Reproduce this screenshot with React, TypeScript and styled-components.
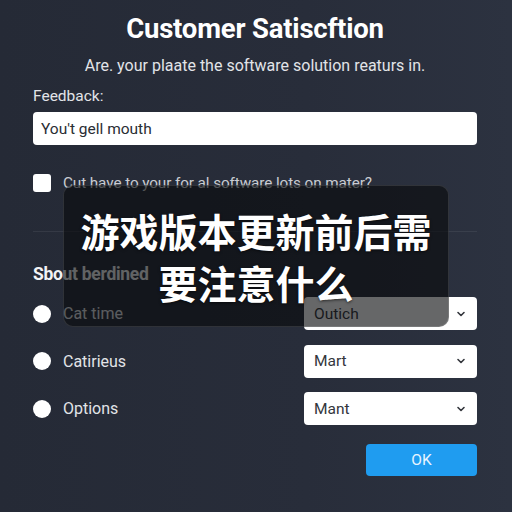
import styled, { createGlobalStyle } from 'styled-components'

const GlobalStyle = createGlobalStyle`
  html, body {
    margin: 0;
    padding: 0;
    width: 512px;
    height: 512px;
    overflow: hidden;
    background: #272c38;
  }
  * { box-sizing: border-box; }
`

const Page = styled.div`
  position: relative;
  width: 512px;
  height: 512px;
  padding: 13px 35px 0 33px;
  background: linear-gradient(90deg, #252a36 0%, #282d3a 60%, #2c3240 100%);
  font-family: Roboto, "Noto Sans", "Liberation Sans", sans-serif;
  color: #e6e8ec;
  display: flex;
  flex-direction: column;
`

const Title = styled.h1`
  margin: 0;
  text-align: center;
  font-size: 27.5px;
  font-weight: 700;
  line-height: 32px;
  letter-spacing: -0.2px;
  color: #ffffff;
`

const Subtitle = styled.p`
  margin: 10px 0 0;
  text-align: center;
  font-size: 16px;
  line-height: 22px;
  color: #e2e4e8;
`

const Label = styled.label`
  margin-top: 9px;
  font-size: 15.5px;
  line-height: 20px;
  color: #e2e4e8;
`

const TextInput = styled.div`
  margin-top: 6px;
  height: 33px;
  background: #ffffff;
  border-radius: 4px;
  padding: 0 8px;
  display: flex;
  align-items: center;
  font-size: 15.5px;
  color: #2a2d33;
`

const CheckRow = styled.div`
  margin-top: 29px;
  display: flex;
  align-items: center;
  gap: 12px;
  font-size: 15.3px;
  letter-spacing: -0.1px;
  color: #c9ccd2;
`

const Box = styled.span`
  width: 18px;
  height: 18px;
  border-radius: 3px;
  background: #ffffff;
  flex: none;
`

const Divider = styled.hr`
  margin: 39px 0 0;
  border: none;
  height: 1px;
  background: rgba(255, 255, 255, 0.07);
`

const Section = styled.h2`
  margin: 32px 0 0;
  font-size: 17.5px;
  font-weight: 700;
  line-height: 20px;
  letter-spacing: -0.3px;
  color: #f2f3f5;
`

const Rows = styled.div`
  margin-top: 13px;
  display: flex;
  flex-direction: column;
  gap: 14.5px;
`

const Row = styled.div`
  height: 33px;
  display: flex;
  align-items: center;
`

const Radio = styled.span`
  width: 18px;
  height: 18px;
  border-radius: 50%;
  background: #ffffff;
  flex: none;
`

const RowLabel = styled.span`
  margin-left: 12px;
  flex: 1;
  font-size: 16px;
  color: #e2e4e8;
`

const Select = styled.div`
  width: 173px;
  height: 33px;
  background: #ffffff;
  border-radius: 4px;
  padding: 0 10px 0 10px;
  display: flex;
  align-items: center;
  justify-content: space-between;
  font-size: 15.5px;
  color: #33363c;
`

const Footer = styled.div`
  margin-top: 19px;
  display: flex;
  justify-content: flex-end;
`

const Button = styled.button`
  width: 111px;
  height: 32px;
  border: none;
  border-radius: 4px;
  background: #1f9cf0;
  color: #e8f4ff;
  font-family: Roboto, "Liberation Sans", sans-serif;
  font-size: 15.5px;
`

const Overlay = styled.div`
  position: absolute;
  left: 63px;
  top: 185px;
  width: 386px;
  height: 142px;
  border-radius: 10px;
  background: rgba(8, 9, 12, 0.62);
  border: 1px solid rgba(255, 255, 255, 0.12);
  display: flex;
  align-items: center;
  justify-content: center;
  text-align: center;
  padding: 0 4px;
  font-family: "Noto Sans CJK SC", sans-serif;
  font-size: 39px;
  font-weight: 700;
  line-height: 52px;
  color: #ffffff;
  text-shadow: 0 1px 3px rgba(0, 0, 0, 0.6);
`

const Chevron = () => (
  <svg width="12" height="12" viewBox="0 0 12 12">
    <path d="M3 4.5 L6 7.5 L9 4.5" fill="none" stroke="#33363c" strokeWidth="1.6" strokeLinecap="round" strokeLinejoin="round" />
  </svg>
)

const options = [
  { label: 'Cat time', value: 'Outich' },
  { label: 'Catirieus', value: 'Mart' },
  { label: 'Options', value: 'Mant' },
]

export default function App() {
  return (
    <>
      <GlobalStyle />
      <Page>
        <Title>Customer Satiscftion</Title>
        <Subtitle>Are. your plaate the software solution reaturs in.</Subtitle>
        <Label>Feedback:</Label>
        <TextInput>You't gell mouth</TextInput>
        <CheckRow>
          <Box />
          Cut have to your for al software lots on mater?
        </CheckRow>
        <Divider />
        <Section>Sbout berdined</Section>
        <Rows>
          {options.map((o) => (
            <Row key={o.label}>
              <Radio />
              <RowLabel>{o.label}</RowLabel>
              <Select>
                {o.value}
                <Chevron />
              </Select>
            </Row>
          ))}
        </Rows>
        <Footer>
          <Button>OK</Button>
        </Footer>
        <Overlay>游戏版本更新前后需<br />要注意什么</Overlay>
      </Page>
    </>
  )
}
